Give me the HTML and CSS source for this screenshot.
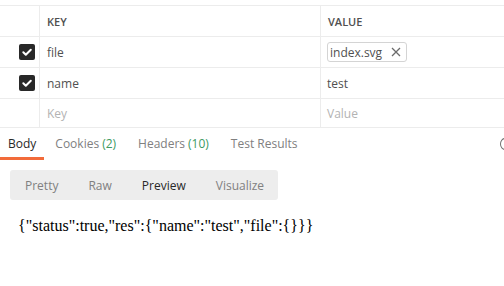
FILE: index.html
```html
<!DOCTYPE html>
<html lang="en">
<head>
    <meta charset="UTF-8">
    <title>Request body</title>
    <link rel="stylesheet" href="styles.css">
</head>
<body>
    <div class="params">
        <div class="param-row head">
            <div class="cell check"></div>
            <div class="cell key">KEY</div>
            <div class="cell value">VALUE</div>
        </div>
        <div class="param-row">
            <div class="cell check"><span class="checkbox"><svg viewBox="0 0 16 16" width="16" height="16"><path d="M4.3 8.2l2.5 2.5 5-5" fill="none" stroke="#fff" stroke-width="2" stroke-linecap="round" stroke-linejoin="round"/></svg></span></div>
            <div class="cell key">file</div>
            <div class="cell value">
                <span class="file-chip">index.svg
                    <svg class="chip-x" viewBox="0 0 10 10" width="10" height="10"><path d="M1 1l8 8M9 1l-8 8" stroke="#6b6b6b" stroke-width="1.3"/></svg>
                </span>
            </div>
        </div>
        <div class="param-row">
            <div class="cell check"><span class="checkbox"><svg viewBox="0 0 16 16" width="16" height="16"><path d="M4.3 8.2l2.5 2.5 5-5" fill="none" stroke="#fff" stroke-width="2" stroke-linecap="round" stroke-linejoin="round"/></svg></span></div>
            <div class="cell key">name</div>
            <div class="cell value">test</div>
        </div>
        <div class="param-row last">
            <div class="cell check"></div>
            <div class="cell key placeholder">Key</div>
            <div class="cell value placeholder">Value</div>
        </div>
    </div>

    <div class="response-tabs">
        <div class="tab active">Body</div>
        <div class="tab">Cookies <span class="count">(2)</span></div>
        <div class="tab">Headers <span class="count">(10)</span></div>
        <div class="tab">Test Results</div>
        <span class="tab-icon"></span>
    </div>

    <div class="view-modes">
        <div class="mode">Pretty</div>
        <div class="mode">Raw</div>
        <div class="mode active">Preview</div>
        <div class="mode">Visualize</div>
    </div>

    <div class="preview">{"status":true,"res":{"name":"test","file":{}}}</div>
</body>
</html>
```

FILE: styles.css
```css
body {
    margin: 0;
    padding: 0;
    font-family: 'Open Sans', sans-serif;
    font-size: 12px;
    color: #505050;
    background: #fff;
    overflow: hidden;
    width: 504px;
    height: 286px;
}

.params {
    margin-top: 5px;
    border-top: 1px solid #ececec;
    width: 520px;
}

.param-row {
    display: flex;
    height: 30px;
    border-bottom: 1px solid #ececec;
}

.param-row.last {
    height: 28px;
}

.cell {
    display: flex;
    align-items: center;
    box-sizing: border-box;
}

.cell.check {
    width: 40px;
    justify-content: flex-end;
    padding-right: 4px;
    border-right: 1px solid #ececec;
}

.cell.key {
    width: 281px;
    padding-left: 7px;
    border-right: 1px solid #ececec;
}

.cell.value {
    flex: 1;
    padding-left: 6px;
}

.head .cell {
    font-size: 11px;
    font-weight: 600;
    color: #505050;
}

.head .cell.value {
    padding-left: 7px;
}

.placeholder {
    color: #b3b3b3;
}

.checkbox {
    width: 16px;
    height: 16px;
    border-radius: 2px;
    background: #282828;
    display: block;
}

.checkbox svg {
    display: block;
}

.file-chip {
    display: inline-flex;
    align-items: center;
    height: 18px;
    padding: 0 5px 0 2px;
    border: 1px solid #d4d4d4;
    border-radius: 3px;
    font-size: 12px;
    color: #505050;
}

.chip-x {
    margin-left: 9px;
}

.response-tabs {
    position: relative;
    display: flex;
    height: 32px;
}

.tab {
    display: flex;
    align-items: center;
    padding: 1px 11px 0;
    font-size: 12px;
    color: #808080;
    border-bottom: 3px solid transparent;
}

.tab.active {
    padding-left: 8px;
    padding-right: 8px;
    color: #282828;
    border-bottom-color: #f26b3a;
}

.count {
    color: #3d9a5f;
    margin-left: 3px;
}

.tab-icon {
    position: absolute;
    right: -6px;
    top: 10px;
    width: 8px;
    height: 10px;
    border: 1px solid #707070;
    border-radius: 50%;
}

.view-modes {
    display: flex;
    margin: 10px 0 0 10px;
    width: 268px;
    height: 30px;
    background: #ededed;
    border-radius: 3px;
}

.mode {
    display: flex;
    align-items: center;
    padding: 0 15px;
    font-size: 12px;
    color: #808080;
}

.mode.active {
    color: #282828;
}

.preview {
    margin: 10px 0 0 18px;
    padding-top: 7px;
    font-family: 'Liberation Serif', serif;
    font-size: 16px;
    color: #000;
}
```
